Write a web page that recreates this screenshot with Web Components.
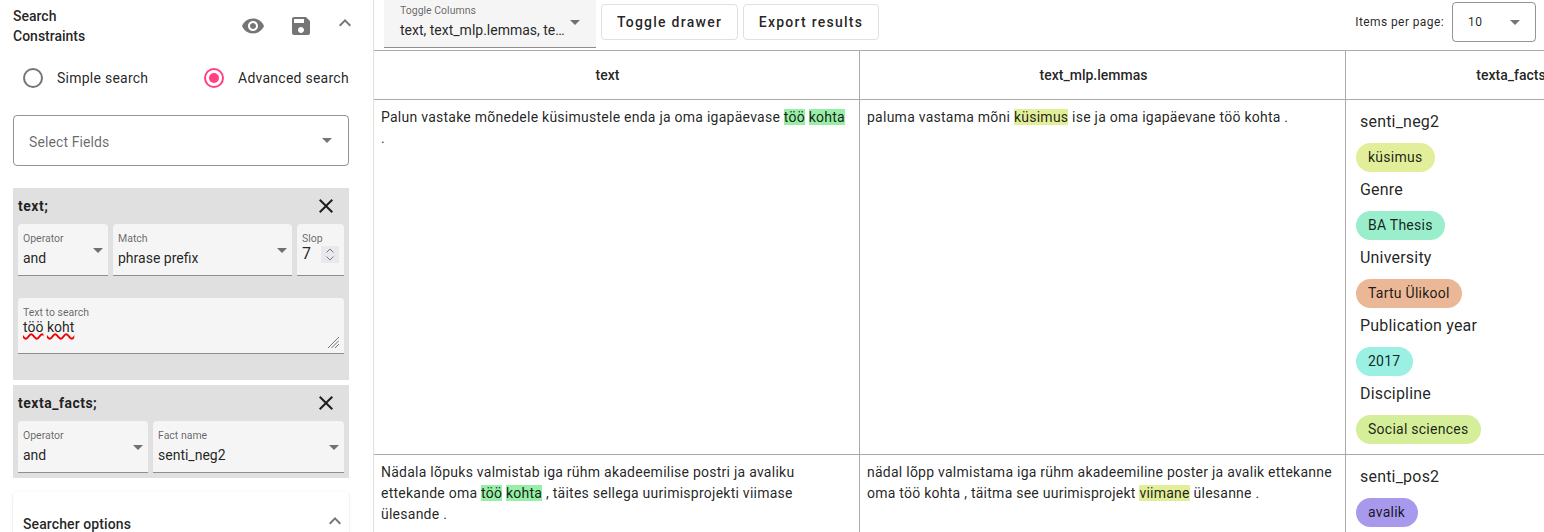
<!DOCTYPE html>
<html lang="et">
<head>
<meta charset="utf-8">
<title>Search results</title>
<style>
  html, body { margin: 0; height: 100%; overflow: hidden; background: #fff; }
  body { font-family: Roboto, "Liberation Sans", sans-serif; font-size: 14px; color: rgba(0, 0, 0, .87); }
</style>
</head>
<body>
<search-page>
  <search-sidebar slot="side">
    <constraint-group name="text;" slot="groups" style="height:192px">
      <div style="display:flex;gap:5px">
        <fill-select label="Operator" value="and" style="width:90px"></fill-select>
        <fill-select label="Match" value="phrase prefix" style="width:179px"></fill-select>
        <slop-input label="Slop" value="7" style="width:47px"></slop-input>
      </div>
      <text-search label="Text to search" style="margin-top:22px"><u>töö</u> <u>koht</u></text-search>
    </constraint-group>
    <constraint-group name="texta_facts;" slot="groups" style="height:93px">
      <div style="display:flex;gap:5px">
        <fill-select label="Operator" value="and" style="width:130px"></fill-select>
        <fill-select label="Fact name" value="senti_neg2" style="width:191px"></fill-select>
      </div>
    </constraint-group>
  </search-sidebar>

  <results-toolbar slot="top"></results-toolbar>

  <result-table slot="main">
    <result-cell head>text</result-cell>
    <result-cell head>text_mlp.lemmas</result-cell>
    <result-cell head last>texta_facts</result-cell>

    <result-cell>Palun vastake mõnedele küsimustele enda ja oma igapäevase <hit-mark color="#98eea6">töö</hit-mark> <hit-mark color="#98eea6">kohta</hit-mark> .</result-cell>
    <result-cell>paluma vastama mõni <hit-mark color="#e3ee9b">küsimus</hit-mark> ise ja oma igapäevane töö kohta .</result-cell>
    <result-cell facts last>
      <fact-entry name="senti_neg2" value="küsimus" color="#e3ee9b"></fact-entry>
      <fact-entry name="Genre" value="BA Thesis" color="#9aeecb"></fact-entry>
      <fact-entry name="University" value="Tartu Ülikool" color="#ebb897"></fact-entry>
      <fact-entry name="Publication year" value="2017" color="#9af0e2"></fact-entry>
      <fact-entry name="Discipline" value="Social sciences" color="#d5ee9a"></fact-entry>
    </result-cell>

    <result-cell>Nädala lõpuks valmistab iga rühm akadeemilise postri ja avaliku ettekande oma <hit-mark color="#98eea6">töö</hit-mark> <hit-mark color="#98eea6">kohta</hit-mark> , täites sellega uurimisprojekti viimase ülesande .</result-cell>
    <result-cell>nädal lõpp valmistama iga rühm akadeemiline poster ja avalik ettekanne oma töö kohta , täitma see uurimisprojekt <hit-mark color="#e3ee9b">viimane</hit-mark> ülesanne .</result-cell>
    <result-cell facts last>
      <fact-entry name="senti_pos2" value="avalik" color="#a999ec"></fact-entry>
    </result-cell>
  </result-table>
</search-page>

<script>
const ICONS = {
  eye: 'M12 4.5C7 4.5 2.73 7.61 1 12c1.73 4.39 6 7.5 11 7.5s9.27-3.11 11-7.5c-1.73-4.39-6-7.5-11-7.5zM12 17c-2.76 0-5-2.24-5-5s2.24-5 5-5 5 2.24 5 5-2.24 5-5 5zm0-8c-1.66 0-3 1.34-3 3s1.34 3 3 3 3-1.34 3-3-1.34-3-3-3z',
  save: 'M17 3H5c-1.11 0-2 .9-2 2v14c0 1.1.89 2 2 2h14c1.1 0 2-.9 2-2V7l-4-4zm-5 16c-1.66 0-3-1.34-3-3s1.34-3 3-3 3 1.34 3 3-1.34 3-3 3zm3-10H5V5h10v4z',
  up: 'M7.41 15.41L12 10.83l4.59 4.58L18 14l-6-6-6 6z',
  close: 'M19 6.41L17.59 5 12 10.59 6.41 5 5 6.41 10.59 12 5 17.59 6.41 19 12 13.41 17.59 19 19 17.59 13.41 12z'
};

function icon(name, fill) {
  return `<svg width="24" height="24" viewBox="0 0 24 24" fill="${fill}" style="display:block;flex:none"><path d="${ICONS[name]}"/></svg>`;
}

const CARET = `<svg width="10" height="5" viewBox="0 0 10 5" style="display:block"><path d="M0 0h10L5 5z" fill="rgba(0,0,0,.54)"/></svg>`;

class Base extends HTMLElement {
  constructor() {
    super();
    this.shadowDOM = this.attachShadow({ mode: 'open' });
  }

  connectedCallback() {
    this.render();
  }
}

class SearchPage extends Base {
  render() {
    this.shadowDOM.innerHTML = `
      <style>
        :host { display: flex; width: 100vw; height: 100vh; overflow: hidden; }
        .side { width: 373px; flex: none; border-right: 1px solid #e0e0e0; overflow: hidden; }
        .content { flex: 1; min-width: 0; display: flex; flex-direction: column; overflow: hidden; }
      </style>
      <div class="side"><slot name="side"></slot></div>
      <div class="content">
        <slot name="top"></slot>
        <slot name="main"></slot>
      </div>
    `;
  }
}

class SearchSidebar extends Base {
  render() {
    this.shadowDOM.innerHTML = `
      <style>
        :host { display: block; padding: 6px 24px 0 13px; width: 336px; }
        .head { display: flex; align-items: flex-start; height: 40px; }
        h2 { margin: 0; font: 500 14px/20px Roboto, sans-serif; width: 228px; flex: none; }
        .head svg:nth-of-type(1) { margin-top: 8px; }
        .head svg:nth-of-type(2) { margin: 8px 0 0 24px; }
        .head svg:nth-of-type(3) { margin: 5px 0 0 20px; }
        .radios { display: flex; height: 24px; margin-top: 20px; padding-left: 10px; align-items: center; }
        radio-option:first-child { width: 181px; }
        .fields { margin-top: 25px; height: 49px; border: 1px solid rgba(0, 0, 0, .42); border-radius: 4px;
          display: flex; align-items: center; justify-content: space-between; padding: 0 16px 0 15px;
          color: rgba(0, 0, 0, .6); letter-spacing: .1px; }
        .fields span { padding-top: 2px; }
        .groups { margin-top: 22px; display: flex; flex-direction: column; gap: 5px; }
        .card { margin-top: 14px; height: 80px; border-radius: 4px; padding: 22px 2px 0 10px;
          box-shadow: 0 2px 1px -1px rgba(0,0,0,.2), 0 1px 1px rgba(0,0,0,.14), 0 1px 3px rgba(0,0,0,.12);
          display: flex; justify-content: space-between; font: 500 14px/20px Roboto, sans-serif; letter-spacing: .1px; }
        .card svg { margin-top: -5px; }
      </style>
      <div class="head">
        <h2>Search<br>Constraints</h2>
        ${icon('eye', 'rgba(0,0,0,.54)')}
        ${icon('save', 'rgba(0,0,0,.54)')}
        ${icon('up', 'rgba(0,0,0,.54)')}
      </div>
      <div class="radios">
        <radio-option label="Simple search"></radio-option>
        <radio-option label="Advanced search" checked></radio-option>
      </div>
      <div class="fields"><span>Select Fields</span>${CARET}</div>
      <div class="groups"><slot name="groups"></slot></div>
      <div class="card"><span>Searcher options</span>${icon('up', 'rgba(0,0,0,.54)')}</div>
    `;
  }
}

class RadioOption extends Base {
  render() {
    const on = this.hasAttribute('checked');
    this.shadowDOM.innerHTML = `
      <style>
        :host { display: flex; align-items: center; gap: 14px; letter-spacing: .25px; }
        i { width: 20px; height: 20px; box-sizing: border-box; border-radius: 50%; flex: none;
          border: 2px solid ${on ? '#ff4081' : 'rgba(0,0,0,.54)'}; display: grid; place-items: center; }
        b { width: 10px; height: 10px; border-radius: 50%; background: #ff4081; }
      </style>
      <i>${on ? '<b></b>' : ''}</i><span>${this.getAttribute('label')}</span>
    `;
  }
}

class ConstraintGroup extends Base {
  render() {
    this.shadowDOM.innerHTML = `
      <style>
        :host { display: block; box-sizing: border-box; background: #e0e0e0; padding: 5px 5px 5px 5px; }
        .title { display: flex; justify-content: space-between; align-items: center; height: 26px; margin-bottom: 5px;
          font: 700 14px/26px Roboto, sans-serif; letter-spacing: .5px; }
        .title svg { margin-right: 6px; }
      </style>
      <div class="title"><span>${this.getAttribute('name')}</span>${icon('close', 'rgba(0,0,0,.87)')}</div>
      <slot></slot>
    `;
  }
}

const FIELD_CSS = `
  :host { display: block; box-sizing: border-box; height: 52px; background: #f5f5f5; border-radius: 4px 4px 0 0;
    border-bottom: 1px solid rgba(0, 0, 0, .42); padding: 8px 5px 0; position: relative; }
  label { display: block; font-size: 10.5px; line-height: 13px; color: rgba(0, 0, 0, .6); }
  .value { display: block; font-size: 14px; line-height: 20px; margin-top: 3px; white-space: nowrap; }
`;

class FillSelect extends Base {
  render() {
    this.shadowDOM.innerHTML = `
      <style>
        ${FIELD_CSS}
        .row { display: flex; justify-content: space-between; }
        .caret { margin-top: 16px; }
      </style>
      <div class="row">
        <div><label>${this.getAttribute('label')}</label><span class="value">${this.getAttribute('value')}</span></div>
        <div class="caret">${CARET}</div>
      </div>
    `;
  }
}

class SlopInput extends Base {
  render() {
    this.shadowDOM.innerHTML = `
      <style>
        ${FIELD_CSS}
        .row { display: flex; justify-content: space-between; }
        .value { margin-top: 1px; line-height: 16px; font-size: 16px; }
        svg { display: block; margin: 1px 0 0 0; }
      </style>
      <label>${this.getAttribute('label')}</label>
      <div class="row">
        <span class="value">${this.getAttribute('value')}</span>
        <svg width="18" height="17" viewBox="0 0 18 17"><rect width="18" height="17" fill="#e9e9ed"/>
          <path d="M5.5 6.5L9 3l3.5 3.5M5.5 10.5L9 14l3.5-3.5" fill="none" stroke="#77777c" stroke-width="1"/></svg>
      </div>
    `;
  }
}

class TextSearch extends Base {
  render() {
    this.shadowDOM.innerHTML = `
      <style>
        ${FIELD_CSS}
        :host { height: 56px; padding-top: 8px; }
        .value { margin-top: 0; line-height: 17px; }
        ::slotted(u) { text-decoration: underline wavy #f00000 1.5px; text-underline-offset: 1px; }
        svg { position: absolute; right: 5px; bottom: 5px; display: block; }
      </style>
      <label>${this.getAttribute('label')}</label>
      <span class="value"><slot></slot></span>
      <svg width="11" height="11" viewBox="0 0 11 11"><path d="M0 11L11 0M3.5 11L11 3.5M7 11l4-4" stroke="#777" stroke-width="1" fill="none"/></svg>
    `;
  }
}

class ResultsToolbar extends Base {
  render() {
    this.shadowDOM.innerHTML = `
      <style>
        :host { display: flex; flex: none; box-sizing: border-box; height: 51px; border-bottom: 1px solid #aaa;
          padding-left: 10px; align-items: flex-start; }
        .columns { box-sizing: border-box; width: 212px; height: 48px; background: #f5f5f5;
          border-bottom: 1px solid rgba(0, 0, 0, .42); padding: 4px 16px 0; display: flex; justify-content: space-between; }
        .columns label { display: block; font-size: 10.5px; line-height: 13px; color: rgba(0, 0, 0, .6); }
        .columns span { display: block; font-size: 14px; line-height: 20px; margin-top: 3px; white-space: nowrap; }
        .columns svg { margin-top: 16px; }
        button { box-sizing: border-box; height: 36px; margin: 4px 0 0 5px; background: #fff; border: 1px solid #e0e0e0;
          border-radius: 4px; font: 500 14px Roboto, sans-serif; letter-spacing: 1.25px; color: rgba(0, 0, 0, .87); padding: 0; }
        .pager { margin-left: auto; display: flex; align-items: center; height: 44px; font-size: 12px;
          letter-spacing: .4px; color: rgba(0, 0, 0, .87); }
        .size { box-sizing: border-box; width: 84px; height: 40px; margin: 0 8px 0 8px; border: 1px solid rgba(0, 0, 0, .42);
          border-radius: 4px; display: flex; align-items: center; justify-content: space-between; padding: 0 15px; }
      </style>
      <div class="columns">
        <div><label>Toggle Columns</label><span>text, text_mlp.lemmas, te…</span></div>
        ${CARET}
      </div>
      <button style="width:137px">Toggle drawer</button>
      <button style="width:136px">Export results</button>
      <div class="pager">
        <span>Items per page:</span>
        <div class="size"><span>10</span>${CARET}</div>
      </div>
    `;
  }
}

class ResultTable extends Base {
  render() {
    this.shadowDOM.innerHTML = `
      <style>
        :host { display: grid; grid-template-columns: 486px 486px 348px; align-content: start; flex: none; }
      </style>
      <slot></slot>
    `;
  }
}

class ResultCell extends Base {
  render() {
    const head = this.hasAttribute('head');
    const facts = this.hasAttribute('facts');
    const last = this.hasAttribute('last');
    this.shadowDOM.innerHTML = `
      <style>
        :host { display: block; box-sizing: border-box; border-bottom: 1px solid #aaa;
          ${last ? '' : 'border-right: 1px solid #aaa;'}
          ${head ? 'height: 49px; font-weight: 500; text-align: center; line-height: 48px; padding-right: 18px;'
                 : facts ? 'padding: 10px 10px 10px;' : 'padding: 7px 10px 7px 7px; line-height: 21px; letter-spacing: .25px;'} }
      </style>
      <slot></slot>
    `;
  }
}

class HitMark extends Base {
  render() {
    // no whitespace around the slot, it would pick up the highlight
    this.shadowDOM.innerHTML = `<style>:host { display: inline; background: ${this.getAttribute('color')}; }</style><slot></slot>`;
  }
}

class FactEntry extends Base {
  render() {
    this.shadowDOM.innerHTML = `
      <style>
        :host { display: block; margin-bottom: 6px; }
        :host(:last-child) { margin-bottom: 0; }
        .name { font-size: 16px; line-height: 24px; padding-left: 4px; letter-spacing: .2px; }
        .chip { display: table; height: 29px; line-height: 29px; margin-top: 9px; padding: 0 12.5px 0 12px; border-radius: 15px;
          background: ${this.getAttribute('color')}; letter-spacing: .25px; }
      </style>
      <div class="name">${this.getAttribute('name')}</div>
      <span class="chip">${this.getAttribute('value')}</span>
    `;
  }
}

customElements.define('search-page', SearchPage);
customElements.define('search-sidebar', SearchSidebar);
customElements.define('radio-option', RadioOption);
customElements.define('constraint-group', ConstraintGroup);
customElements.define('fill-select', FillSelect);
customElements.define('slop-input', SlopInput);
customElements.define('text-search', TextSearch);
customElements.define('results-toolbar', ResultsToolbar);
customElements.define('result-table', ResultTable);
customElements.define('result-cell', ResultCell);
customElements.define('hit-mark', HitMark);
customElements.define('fact-entry', FactEntry);
</script>
</body>
</html>
